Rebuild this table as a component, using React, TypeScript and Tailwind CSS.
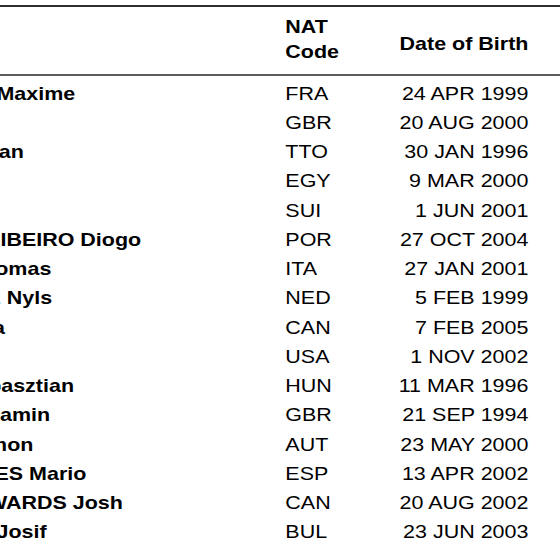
const rows: [string, string, string][] = [
  ["GROUSSET Maxime", "FRA", "24 APR 1999"],
  ["DEAN Tom", "GBR", "20 AUG 2000"],
  ["CARTER Dylan", "TTO", "30 JAN 1996"],
  ["SAMEH Ali", "EGY", "9 MAR 2000"],
  ["PONTI Noe", "SUI", "1 JUN 2001"],
  ["FERREIRA RIBEIRO Diogo", "POR", "27 OCT 2004"],
  ["CECCON Thomas", "ITA", "27 JAN 2001"],
  ["KORSTANJE Nyls", "NED", "5 FEB 1999"],
  ["KHARUN Ilya", "CAN", "7 FEB 2005"],
  ["ROSE Dare", "USA", "1 NOV 2002"],
  ["SZABO Szebasztian", "HUN", "11 MAR 1996"],
  ["PROUD Benjamin", "GBR", "21 SEP 1994"],
  ["BUCHER Simon", "AUT", "23 MAY 2000"],
  ["MOLLA YANES Mario", "ESP", "13 APR 2002"],
  ["LIENDO EDWARDS Josh", "CAN", "20 AUG 2002"],
  ["MILADINOV Josif", "BUL", "23 JUN 2003"],
];

const App = () => {
  return (
    <div className="h-[549px] w-[560px] overflow-hidden bg-white pt-[5px] font-['Liberation_Sans',Arial,sans-serif] text-[18.5px] text-black">
      {/* the source page is stretched sideways, so the whole table is too */}
      <div className="w-[483px] origin-left scale-x-[1.16]">
        <div className="-ml-[112px] w-[596px]">
          <div className="grid h-[71px] grid-cols-[358px_90px_148px] border-t-2 border-b-2 border-t-[#2e2e2e] border-b-[#5c5c5c] font-bold">
            <div />
            <div className="pt-[7px] leading-[25px]">
              NAT
              <br />
              Code
            </div>
            <div className="pt-[24px] pr-[28.5px] text-right leading-[25px]">
              Date of Birth
            </div>
          </div>

          <div className="grid auto-rows-[29.27px] grid-cols-[358px_90px_148px] pt-[2.5px] leading-[29.27px]">
            {rows.map(([name, nat, dob], i) => (
              <div key={i} className="contents">
                <div className="whitespace-nowrap font-bold">{name}</div>
                <div>{nat}</div>
                <div className="whitespace-nowrap pr-[28.5px] text-right">{dob}</div>
              </div>
            ))}
          </div>
        </div>
      </div>
    </div>
  );
};

export default App;
